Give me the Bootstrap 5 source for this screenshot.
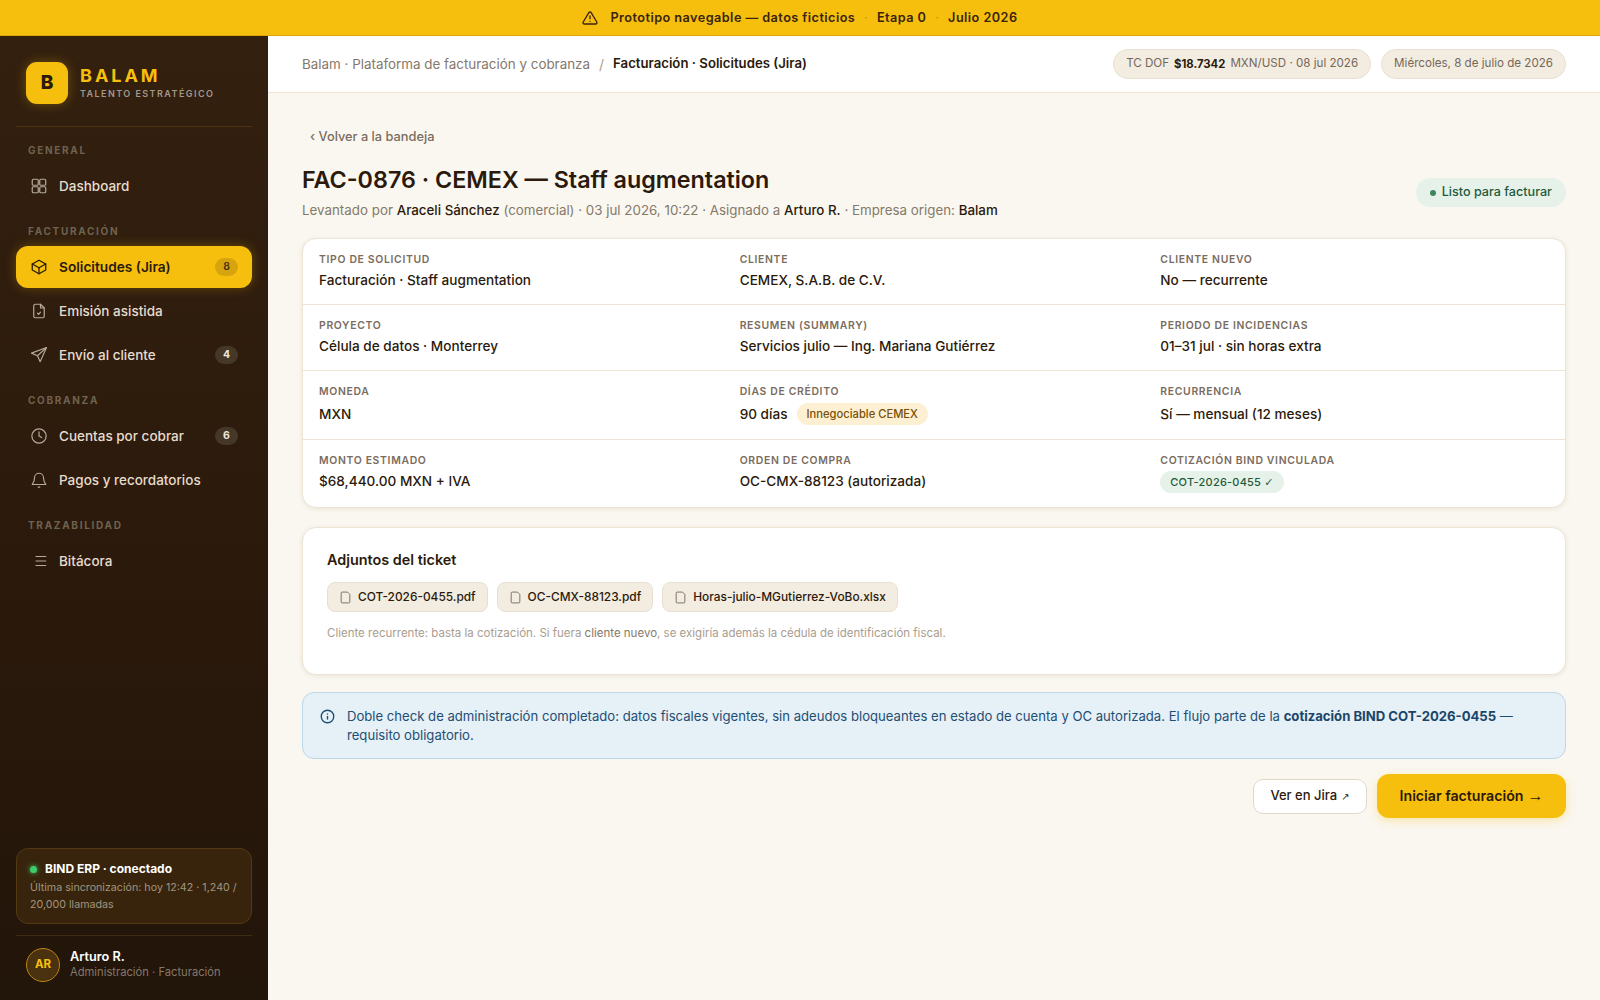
<!DOCTYPE html>
<html lang="es">
<head>
  <meta charset="UTF-8" />
  <meta name="viewport" content="width=device-width, initial-scale=1.0"/>
  <title>Balam · Solicitudes</title>
  <link href="https://cdn.jsdelivr.net/npm/bootstrap@5.3.2/dist/css/bootstrap.min.css" rel="stylesheet">
  <style>
    :root { --ink: #2b1a0c; --amber: #f7bf0d; --line: #ede4d6; --muted: #7a6c5e; }
    html, body { height: 100%; }
    body { background: #faf7f0; color: var(--ink); font-family: Inter, "Noto Sans", sans-serif; overflow: hidden; }
    svg { flex: none; fill: none; stroke: currentColor; stroke-linecap: round; stroke-linejoin: round; }
    .sym { font-family: "Liberation Sans", "DejaVu Sans", sans-serif; font-weight: 400; }

    .proto-bar { height: 36px; background: var(--amber); border-bottom: 1px solid #d9a50a; font-size: 12.7px; font-weight: 600; letter-spacing: .035em; color: #3a2410; }
    .proto-bar .sep { color: #b98e1a; font-size: 10px; margin: 0 1px; }

    .side { width: 268px; background: linear-gradient(180deg, #33200f 0%, #2c1a0c 50%, #221509 100%); color: #e9e0d3; padding: 26px 16px 0; }
    .logo-row { margin-bottom: 22px; }
    .logo-box { width: 42px; height: 42px; margin-left: 10px; border-radius: 11px; background: var(--amber); color: var(--ink); font-size: 19px; font-weight: 800; box-shadow: 0 0 12px rgba(247,191,13,.3); }
    .logo-name { color: var(--amber); font-size: 18px; line-height: 22px; font-weight: 700; letter-spacing: .165em; margin-top: -1px; }
    .logo-sub { color: #a2988a; font-size: 9px; line-height: 12px; font-weight: 600; letter-spacing: .16em; margin-top: 1px; }
    .side-rule { border-top: 1px solid #4d3510; margin: 0; opacity: 1; }
    .side-label { color: #6f6250; font-size: 10px; font-weight: 700; letter-spacing: .17em; line-height: 14px; padding: 15px 12px 8px; }
    .side-label.first { padding-top: 16px; }
    .side-link { height: 42px; margin-bottom: 2px; padding: 0 14px; border-radius: 12px; color: #e6dccd; font-size: 13.5px; font-weight: 450; gap: 11px; text-decoration: none; }
    .side-link svg { color: #b5aa9b; }
    .side-link.on { background: var(--amber); color: var(--ink); font-size: 13.7px; font-weight: 600; box-shadow: 0 0 12px rgba(247,191,13,.28); }
    .side-link.on svg { color: var(--ink); }
    .side-count { width: 23px; height: 18px; background: #453828; color: #f0e8dc; font-size: 10.5px; font-weight: 700; }
    .side-link.on .side-count { background: #d8a40e; color: #4a3210; font-weight: 600; }
    .bind-box { background: #38240c; border: 1px solid #533a12; border-radius: 12px; padding: 11px 13px 10px; }
    .bind-title { color: #fff; font-size: 12px; font-weight: 700; line-height: 18px; margin-bottom: 1px; }
    .bind-dot { width: 7px; height: 7px; border-radius: 50%; background: #3ecb6c; box-shadow: 0 0 5px #3ecb6c; }
    .bind-text { color: #a1947f; font-size: 10.7px; line-height: 17px; }
    .who { height: 65px; margin-top: 11px; border-top: 1px solid #3f2c12; padding: 12px 10px 0; gap: 10px; }
    .who-pic { width: 34px; height: 34px; border-radius: 50%; border: 1px solid #b8860f; background: #4a3110; color: var(--amber); font-size: 11.5px; font-weight: 700; }
    .who-name { color: #fff; font-size: 12.7px; font-weight: 600; line-height: 16px; margin-top: 1px; }
    .who-role { color: #85796a; font-size: 11.2px; line-height: 15px; }

    .head-bar { height: 57px; background: #fff; border-bottom: 1px solid #eee3d5; padding: 0 34px; }
    .crumb-root { color: #85786b; font-size: 13.4px; }
    .crumb-cut { color: #a99c8d; font-size: 14px; margin: 0 9px; }
    .crumb-now { font-size: 13.2px; font-weight: 600; }
    .head-gap { gap: 10px; }
    .head-pill { height: 30px; padding: 0 12px; background: #f3ece0; border: 1px solid #e8dfd0; color: #75685b; font-size: 11.6px; gap: 5px; }
    .head-pill b { color: var(--ink); font-size: 11.3px; font-weight: 700; }

    .page { padding: 35px 34px 0; }
    .back { color: #7a6c5e; font-size: 12.8px; font-weight: 500; padding-left: 8px; line-height: 18px; }
    .fac-head { margin-bottom: 18px; }
    .fac-title { font-size: 23.3px; line-height: 32px; font-weight: 600; margin: 18px 0 0; }
    .fac-sub { color: #85796a; font-size: 13.35px; line-height: 20px; margin-top: 4px; }
    .fac-sub b { color: var(--ink); font-weight: 500; }
    .ok-pill { height: 29px; padding: 0 14px; background: #e6f2e9; color: #1f5a3b; font-size: 12.6px; font-weight: 500; gap: 6px; margin-bottom: 13px; }
    .ok-pill i { width: 6px; height: 6px; border-radius: 50%; background: #3f8560; }

    .sheet { border: 1px solid var(--line); border-radius: 14px; background: #fff; box-shadow: 0 1px 5px rgba(70,45,10,.09); overflow: hidden; }
    .dt-row { border-bottom: 1px solid var(--line); }
    .dt-row:last-child { border-bottom: 0; }
    .dt-cell { padding: 13px 16px 14px; }
    .dt-row.tall .dt-cell { padding-bottom: 13px; }
    .dt-key { color: #7a6c5e; font-size: 10.4px; line-height: 15px; font-weight: 600; letter-spacing: .065em; text-transform: uppercase; }
    .dt-val { font-size: 13.6px; line-height: 20px; font-weight: 500; margin-top: 3px; }
    .dt-row.tall .dt-val { line-height: 24px; }
    .tag-warn { background: #fdf0d2; color: #7c4f07; font-size: 11.2px; height: 22px; padding: 0 10px; margin-left: 9px; font-weight: 500; }
    .tag-ok { background: #e6f2e9; color: #1f5a3b; font-size: 11px; height: 22px; padding: 0 10px; font-weight: 500; letter-spacing: .02em; }

    .files { padding: 21px 24px 33px; margin-top: 19px; }
    .files-title { font-size: 14.4px; font-weight: 600; line-height: 22px; margin-bottom: 11px; }
    .file-list { gap: 9px; }
    .file-chip { height: 30px; padding: 0 11px; background: #f3ece0; border: 1px solid #e8dfd0; border-radius: 8px; font-size: 11.9px; font-weight: 500; gap: 6px; color: var(--ink); }
    .file-chip svg { color: #6d6053; }
    .files-note { color: #a99d8f; font-size: 11.5px; line-height: 16px; margin-top: 13px; }
    .files-note b { color: #85796a; font-weight: 400; }

    .info-note { margin-top: 17px; padding: 13.5px 24px 13.5px 17px; background: #e5f0f7; border: 1px solid #bcd7e8; border-radius: 12px; color: #1f4e73; font-size: 13.12px; line-height: 19px; gap: 12px; }
    .info-note b { font-weight: 700; color: #1b4669; }
    .info-note svg { margin-top: 2px; }

    .btn-row { margin-top: 15px; gap: 10px; }
    .btn-jira { height: 35px; padding: 0 16.5px; background: #fff; border: 1px solid #e2d8c8; border-radius: 10px; color: var(--ink); font-size: 13px; font-weight: 500; gap: 4px; }
    .btn-jira .sym { font-size: 10px; }
    .btn-start { height: 44px; padding: 0 22.5px; background: var(--amber); border: 0; border-radius: 12px; color: var(--ink); font-size: 14.2px; font-weight: 600; box-shadow: 0 3px 10px rgba(247,191,13,.3); gap: 4px; }
    .btn-start .sym { font-size: 16px; }
    .btn-jira:hover { background: #fff; } .btn-start:hover { background: var(--amber); }
  </style>
</head>
<body class="d-flex flex-column">

  <div class="proto-bar d-flex align-items-center justify-content-center gap-2 flex-shrink-0">
    <svg width="16" height="16" viewBox="0 0 24 24" stroke-width="2"><path d="M10.3 3.9 1.8 18a2 2 0 0 0 1.7 3h17a2 2 0 0 0 1.7-3L13.7 3.9a2 2 0 0 0-3.4 0z"/><path d="M12 9v4"/><path d="M12 17h.01"/></svg>
    <span class="ms-1">Prototipo navegable — datos ficticios</span><span class="sep">·</span><span>Etapa 0</span><span class="sep">·</span><span>Julio 2026</span>
  </div>

  <div class="d-flex flex-grow-1" style="min-height:0">
    <aside class="side d-flex flex-column flex-shrink-0">
      <div class="logo-row d-flex align-items-center gap-2">
        <div class="logo-box d-flex align-items-center justify-content-center">B</div>
        <div class="ms-1">
          <div class="logo-name">BALAM</div>
          <div class="logo-sub">TALENTO ESTRATÉGICO</div>
        </div>
      </div>
      <hr class="side-rule">

      <nav class="nav flex-column flex-nowrap">
        <div class="side-label first">GENERAL</div>
        <a class="side-link d-flex align-items-center" href="#">
          <svg width="18" height="18" viewBox="0 0 24 24" stroke-width="1.6"><rect x="3" y="3" width="8" height="8" rx="1.5"/><rect x="13" y="3" width="8" height="8" rx="1.5"/><rect x="3" y="13" width="8" height="8" rx="1.5"/><rect x="13" y="13" width="8" height="8" rx="1.5"/></svg>
          <span>Dashboard</span>
        </a>

        <div class="side-label">FACTURACIÓN</div>
        <a class="side-link on d-flex align-items-center" href="#">
          <svg width="18" height="18" viewBox="0 0 24 24" stroke-width="1.7"><path d="M21 8 12 3 3 8v8l9 5 9-5z"/><path d="m3 8 9 5 9-5"/><path d="M12 13v8"/></svg>
          <span>Solicitudes (Jira)</span>
          <span class="side-count badge rounded-pill d-flex align-items-center justify-content-center p-0 ms-auto">8</span>
        </a>
        <a class="side-link d-flex align-items-center" href="#">
          <svg width="18" height="18" viewBox="0 0 24 24" stroke-width="1.6"><path d="M14 3H7a2 2 0 0 0-2 2v14a2 2 0 0 0 2 2h10a2 2 0 0 0 2-2V8z"/><path d="M14 3v5h5"/><path d="m10 15 1.5 1.5L14 13.5"/></svg>
          <span>Emisión asistida</span>
        </a>
        <a class="side-link d-flex align-items-center" href="#">
          <svg width="18" height="18" viewBox="0 0 24 24" stroke-width="1.5"><path d="M22 2 2 9.5l8 3.5 3.5 8z"/><path d="M22 2 10 13"/></svg>
          <span>Envío al cliente</span>
          <span class="side-count badge rounded-pill d-flex align-items-center justify-content-center p-0 ms-auto">4</span>
        </a>

        <div class="side-label">COBRANZA</div>
        <a class="side-link d-flex align-items-center" href="#">
          <svg width="18" height="18" viewBox="0 0 24 24" stroke-width="1.6"><circle cx="12" cy="12" r="9.5"/><path d="M12 6.5V12l3.5 2"/></svg>
          <span>Cuentas por cobrar</span>
          <span class="side-count badge rounded-pill d-flex align-items-center justify-content-center p-0 ms-auto">6</span>
        </a>
        <a class="side-link d-flex align-items-center" href="#">
          <svg width="18" height="18" viewBox="0 0 24 24" stroke-width="1.5"><path d="M6 9a6 6 0 0 1 12 0c0 6 3 8 3 9H3c0-1 3-3 3-9z"/><path d="M11 21.5h2"/></svg>
          <span>Pagos y recordatorios</span>
        </a>

        <div class="side-label">TRAZABILIDAD</div>
        <a class="side-link d-flex align-items-center" href="#">
          <svg width="18" height="18" viewBox="0 0 24 24" stroke-width="1.6"><path d="M8 6h13M8 12h13M8 18h13"/></svg>
          <span>Bitácora</span>
        </a>
      </nav>

      <div class="bind-box mt-auto">
        <div class="bind-title d-flex align-items-center gap-2"><span class="bind-dot"></span>BIND ERP · conectado</div>
        <div class="bind-text">Última sincronización: hoy 12:42 · 1,240 / 20,000 llamadas</div>
      </div>
      <div class="who d-flex align-items-start">
        <div class="who-pic d-flex align-items-center justify-content-center flex-shrink-0">AR</div>
        <div>
          <div class="who-name">Arturo R.</div>
          <div class="who-role">Administración · Facturación</div>
        </div>
      </div>
    </aside>

    <div class="flex-grow-1 d-flex flex-column" style="min-width:0">
      <header class="head-bar d-flex align-items-center flex-shrink-0">
        <span class="crumb-root">Balam · Plataforma de facturación y cobranza</span>
        <span class="crumb-cut">/</span>
        <span class="crumb-now">Facturación · Solicitudes (Jira)</span>
        <div class="head-gap ms-auto d-flex">
          <span class="head-pill d-flex align-items-center rounded-pill">TC DOF <b>$18.7342</b> MXN/USD · 08 jul 2026</span>
          <span class="head-pill d-flex align-items-center rounded-pill">Miércoles, 8 de julio de 2026</span>
        </div>
      </header>

      <main class="page flex-grow-1">
        <div class="back">‹ Volver a la bandeja</div>
        <div class="fac-head d-flex align-items-end justify-content-between">
          <div>
            <h1 class="fac-title">FAC-0876 · CEMEX — Staff augmentation</h1>
            <div class="fac-sub">Levantado por <b>Araceli Sánchez</b> (comercial) · 03 jul 2026, 10:22 · Asignado a <b>Arturo R.</b> · Empresa origen: <b>Balam</b></div>
          </div>
          <span class="ok-pill d-flex align-items-center rounded-pill"><i></i>Listo para facturar</span>
        </div>

        <section class="sheet card">
          <div class="dt-row row g-0">
            <div class="dt-cell col-4"><div class="dt-key">Tipo de solicitud</div><div class="dt-val">Facturación · Staff augmentation</div></div>
            <div class="dt-cell col-4"><div class="dt-key">Cliente</div><div class="dt-val">CEMEX, S.A.B. de C.V.</div></div>
            <div class="dt-cell col-4"><div class="dt-key">Cliente nuevo</div><div class="dt-val">No — recurrente</div></div>
          </div>
          <div class="dt-row row g-0">
            <div class="dt-cell col-4"><div class="dt-key">Proyecto</div><div class="dt-val">Célula de datos · Monterrey</div></div>
            <div class="dt-cell col-4"><div class="dt-key">Resumen (summary)</div><div class="dt-val">Servicios julio — Ing. Mariana Gutiérrez</div></div>
            <div class="dt-cell col-4"><div class="dt-key">Periodo de incidencias</div><div class="dt-val">01–31 jul · sin horas extra</div></div>
          </div>
          <div class="dt-row tall row g-0">
            <div class="dt-cell col-4"><div class="dt-key">Moneda</div><div class="dt-val">MXN</div></div>
            <div class="dt-cell col-4"><div class="dt-key">Días de crédito</div><div class="dt-val d-flex align-items-center">90 días <span class="tag-warn d-inline-flex align-items-center rounded-pill">Innegociable CEMEX</span></div></div>
            <div class="dt-cell col-4"><div class="dt-key">Recurrencia</div><div class="dt-val">Sí — mensual (12 meses)</div></div>
          </div>
          <div class="dt-row row g-0">
            <div class="dt-cell col-4"><div class="dt-key">Monto estimado</div><div class="dt-val">$68,440.00 MXN + IVA</div></div>
            <div class="dt-cell col-4"><div class="dt-key">Orden de compra</div><div class="dt-val">OC-CMX-88123 (autorizada)</div></div>
            <div class="dt-cell col-4"><div class="dt-key">Cotización BIND vinculada</div><div class="dt-val d-flex"><span class="tag-ok d-inline-flex align-items-center rounded-pill">COT-2026-0455&nbsp;<span class="sym">✓</span></span></div></div>
          </div>
        </section>

        <section class="sheet card files">
          <div class="files-title">Adjuntos del ticket</div>
          <div class="file-list d-flex">
            <span class="file-chip d-flex align-items-center"><svg width="13" height="13" viewBox="0 0 24 24" stroke-width="1.6"><path d="M15 2H6a2 2 0 0 0-2 2v16a2 2 0 0 0 2 2h12a2 2 0 0 0 2-2V7z"/></svg>COT-2026-0455.pdf</span>
            <span class="file-chip d-flex align-items-center"><svg width="13" height="13" viewBox="0 0 24 24" stroke-width="1.6"><path d="M15 2H6a2 2 0 0 0-2 2v16a2 2 0 0 0 2 2h12a2 2 0 0 0 2-2V7z"/></svg>OC-CMX-88123.pdf</span>
            <span class="file-chip d-flex align-items-center"><svg width="13" height="13" viewBox="0 0 24 24" stroke-width="1.6"><path d="M15 2H6a2 2 0 0 0-2 2v16a2 2 0 0 0 2 2h12a2 2 0 0 0 2-2V7z"/></svg>Horas-julio-MGutierrez-VoBo.xlsx</span>
          </div>
          <div class="files-note">Cliente recurrente: basta la cotización. Si fuera <b>cliente nuevo</b>, se exigiría además la cédula de identificación fiscal.</div>
        </section>

        <div class="info-note d-flex">
          <svg width="15" height="15" viewBox="0 0 24 24" stroke-width="2.2"><circle cx="12" cy="12" r="10"/><path d="M12 16v-4"/><path d="M12 8h.01"/></svg>
          <div>Doble check de administración completado: datos fiscales vigentes, sin adeudos bloqueantes en estado de cuenta y OC autorizada. El flujo parte de la <b>cotización BIND COT-2026-0455</b> — requisito obligatorio.</div>
        </div>

        <div class="btn-row d-flex justify-content-end align-items-center">
          <button class="btn btn-jira d-flex align-items-center" type="button">Ver en Jira <span class="sym">↗</span></button>
          <button class="btn btn-start d-flex align-items-center" type="button">Iniciar facturación <span class="sym">→</span></button>
        </div>
      </main>
    </div>
  </div>

  <script src="https://cdn.jsdelivr.net/npm/bootstrap@5.3.2/dist/js/bootstrap.bundle.min.js"></script>
</body>
</html>
